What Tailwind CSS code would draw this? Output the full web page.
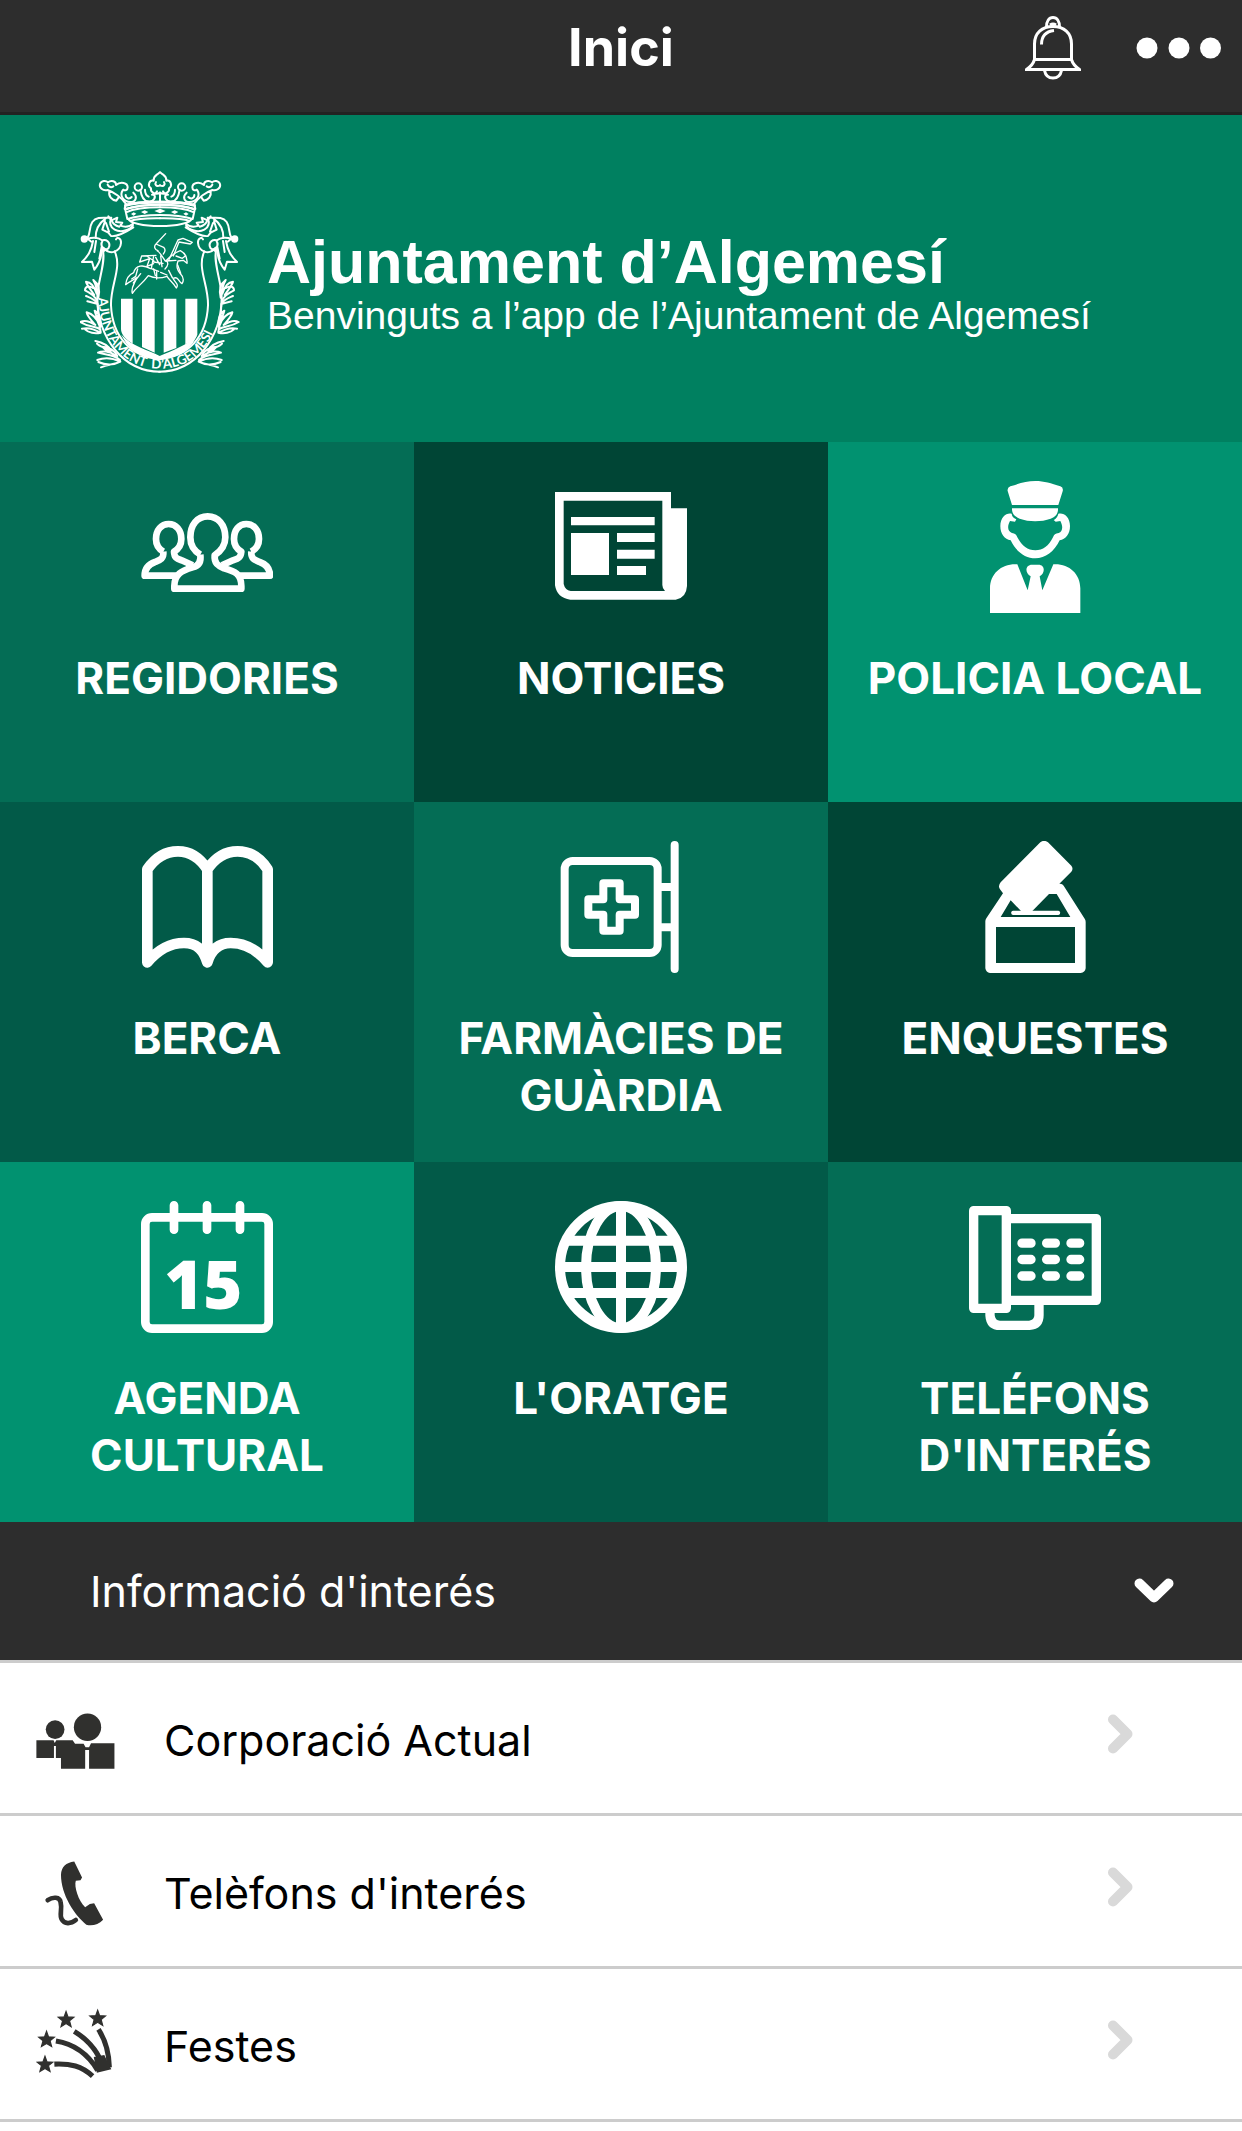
<!DOCTYPE html>
<html lang="ca">
  <head>
    <meta charset="UTF-8" />
    <meta name="viewport" content="width=device-width, initial-scale=1.0" />
    <title>Ajuntament d’Algemesí</title>
    <script src="https://cdn.jsdelivr.net/npm/@tailwindcss/browser@4"></script>
  </head>

  <body class="bg-white font-['Inter',sans-serif] text-black">
    <header
      class="grid grid-cols-3 items-center h-[115px] pb-4 bg-[#2d2d2d] border-b-3 border-[#222222] text-white"
    >
      <h1 class="col-start-2 text-center text-[52px] leading-[60px] font-bold">Inici</h1>
      <div class="flex items-center justify-end gap-[55px] pr-5">
        <button type="button" aria-label="Notificacions">
          <svg class="w-[56px] h-[64px]" viewBox="0 0 56 64" fill="none" stroke="currentColor" stroke-width="3">
            <path d="M21.500 11C21.500 5 24 1.500 28 1.500S34.500 5 34.500 11M25 9q3-2 6 0" />
            <path d="M9.500 43.500V28C9.500 17 17 10.500 28 10.500S46.500 17 46.500 28V43.500Z" />
            <path d="M9.500 43.500C8.500 47 6 50.500 1.500 53.500H54.500C50 50.500 47.500 47 46.500 43.500" />
            <path d="M19.500 54.500C20.500 59.500 23.500 62 28 62S35.500 59.500 36.500 54.500M16.500 28.500C16.500 20 21 15.500 29 14.500" />
          </svg>
        </button>
        <button type="button" aria-label="Més opcions">
          <svg class="w-[86px] h-[22px]" viewBox="0 0 86 22" fill="currentColor">
            <circle cx="11" cy="11" r="10.500" />
            <circle cx="43" cy="11" r="10.500" />
            <circle cx="74.500" cy="11" r="10.500" />
          </svg>
        </button>
      </div>
    </header>

    <main>
      <section
        class="flex items-center gap-[27px] pl-20 pt-[55px] pb-[68px] bg-[#008060] text-white font-['Liberation_Sans',sans-serif]"
      >
        <svg class="w-[160px] h-[204px] shrink-0" viewBox="60 60 480 612" fill="none" stroke="currentColor" stroke-width="6" stroke-linecap="round" stroke-linejoin="round" role="img" aria-label="Escut d’Algemesí">
          <!-- crown -->
          <g id="crown-half">
            <path d="M199 163C185 142 160 126 143 120C128 124 117 112 120 102C124 91 138 91 144 97C154 89 169 94 168 105C182 93 203 98 203 112C203 121 195 123 190 119M148 124C145 139 155 150 169 152L176 142M143 104q7 12 17 5" />
            <path d="M188 121C178 136 190 156 211 156C229 156 233 139 220 128M215 141c-7 8-18 4-18-6M241 119C243 133 248 153 264 154C282 156 290 141 280 132M266 140q-11-5-11-21" />
            <circle cx="235" cy="111" r="11" />
            <path d="M300 128C286 136 270 126 273 115C261 107 268 89 281 92C280 76 289 77 299 67M300 106C287 112 284 102 288 96M300 128V155M291 124q-5 10-15 10" />
            <path d="M300 164C258 164 220 168 196 179L202 207C230 198 265 195 300 195M300 172C260 172 220 177 198 187M205 206C208 219 250 228 300 228M211 213C235 204 265 205 300 205" />
            <path d="M300 155C260 155 220 158 196 165L194 177C230 167 262 164 300 164" />
          </g>
          <use href="#crown-half" transform="matrix(-1 0 0 1 600 0)" />
          <path d="M283 183l17-7 17 7-17 7zM243 186l11-5 11 5-11 6zM333 186l11-5 11 5-11 6zM213 192l8-5 8 4-8 6zM370 191l8-4 8 5-8 5z" fill="currentColor" stroke="none" />
          <path d="M197 166C230 156 260 157 300 157S370 156 403 166" stroke-width="9" />

          <!-- scrolls, ribbons and branches -->
          <g id="side">
            <path d="M219 225C210 241 183 249 164 239C151 232 148 218 154 203C136 205 111 197 97 216C87 231 92 247 83 263" />
            <path d="M145 199L154 211L172 203L168 216L187 218L181 227C198 233 211 229 220 220M154 209C158 221 167 228 178 230M137 205C118 219 106 235 107 264M138 219L147 245M135 213L127 239L145 248L153 258C171 261 192 250 220 232" />
            <path d="M82 267C97 261 116 262 126 271C140 267 150 276 148 288C146 299 136 301 130 293C151 319 181 303 183 279C184 264 172 260 168 268M84 267L94 275M128 272C121 282 123 291 133 302" />
            <circle cx="73" cy="267" r="8" fill="currentColor" />
            <path d="M99 273C94 303 84 318 66 336L96 335L103 359C117 342 126 321 126 290M108 273L103 306M125 291L118 326" />
            <path d="M128 296C139 340 111 395 112 445C114 565 190 665 300 665" />
            <path d="M164 304C187 354 151 404 153 466C157 562 213 620 300 628" />
            <path d="M111 451C103 437 92 429 75 421C75 411 85 405 99 414M103 435C91 418 80 404 78 395C91 396 103 408 110 431C112 414 106 401 100 390C118 403 120 423 115 443M78 438C92 444 105 448 113 462M82 454L111 461" />
            <path d="M121 538C105 527 86 532 61 516C75 508 91 515 106 525C91 508 81 497 80 487C97 492 110 503 117 524C115 506 106 495 104 482C120 491 125 514 119 536M66 536C85 531 108 540 122 548C104 552 85 548 76 539M113 465C115 488 113 512 122 545" />
            <path d="M106 573C127 577 145 586 153 602C140 592 119 592 111 581M180 630C161 613 137 615 114 608C126 602 149 602 166 617C152 604 135 602 127 590C147 590 165 602 172 618M112 630C134 621 159 624 181 635C159 647 137 646 115 636M123 652C145 643 161 644 181 635" />
          </g>
          <use href="#side" transform="matrix(-1 0 0 1 597 0)" />

          <!-- horse and rider -->
          <g stroke-width="4">
            <path d="M317 251L288 282C280 289 285 300 294 302M288 282L311 292C317 298 315 306 310 312M245 318L288 316M245 318L239 336L269 326L261 349L281 341M260 318L282 333M292 303C300 306 305 319 316 333M281 318L274 356L296 364M302 318L306 350M287 322L299 344M281 336L309 340" />
            <path d="M272 356C249 343 227 345 221 368C207 374 199 385 197 404C207 394 222 391 229 383C228 397 211 411 217 430C229 411 245 404 265 377C288 388 306 384 321 379C329 392 341 398 349 414C357 402 347 400 339 385C356 378 354 394 366 401C372 392 371 381 360 370C352 359 348 351 354 333L370 331L381 340C383 321 374 309 361 302C346 307 335 315 318 332C326 337 325 347 315 357" />
            <path d="M340 318L357 276L391 282L397 277L369 265L354 270L325 333M348 318L367 325L377 317M290 365V387M326 361L337 383M353 345L362 370M281 357L286 377M233 357L227 379L215 387M242 371L220 399M318 333L348 331M302 367L321 375" />
          </g>

          <!-- stripes of the shield -->
          <path d="M183 446H218V581C198 569 183 554 183 537ZM246 446H284V608L246 591ZM311 446H349V594L311 608ZM376 446H412V554C406 567 392 576 376 583Z" fill="currentColor" stroke="none" />
          <path d="M184 554C207 604 251 626 300 626S391 604 412 554C383 585 335 602 299 618C265 599 216 590 184 554Z" fill="currentColor" stroke="none" />
          <path id="motto" d="M115 440C116 568 192 656 300 656S483 568 484 425" stroke="none" />
          <text class="font-['Lato',sans-serif] font-bold" fill="currentColor" stroke="none" font-size="40">
            <textPath href="#motto" startOffset="3">AJUNTAMENT &#160;D’ALGEMESI</textPath>
          </text>
        </svg>
        <div class="pt-7">
          <p class="text-[61px] leading-[60px] font-bold">Ajuntament d’Algemesí</p>
          <p class="text-[39px] leading-[48px]">Benvinguts a l’app de l’Ajuntament de Algemesí</p>
        </div>
      </section>

      <nav class="grid grid-cols-3 text-center text-[44px] leading-[57px] font-bold text-white">
        <a href="#regidories" class="flex flex-col items-center gap-[37px] min-h-[360px] pt-[39px] px-5 bg-[#046d55]">
          <svg class="size-[132px]" viewBox="423 123 396 396" fill="none" stroke="currentColor" stroke-width="20" stroke-linejoin="round">
            <path d="M601 344C584 334 571 318 571 292C571 254 592 229 623 229S676 254 676 292C676 318 662 334 644 346C642 370 654 378 672 385C705 394 724 402 724 438V446H523V438C523 402 545 392 578 382C596 378 604 366 601 344" />
            <path d="M490 335C478 328 468 316 468 297C468 270 484 252 506 252S544 270 544 297C544 316 534 328 522 335C523 354 530 356 545 361L578 376M490 335C492 356 480 360 465 366C445 373 434 385 434 407H530" />
            <path d="M754 335C766 328 777 316 777 297C777 270 761 252 739 252S702 270 702 297C702 316 712 328 724 335C722 354 714 356 699 361L666 376M754 335C752 356 764 360 779 366C799 373 810 385 810 407H718" />
          </svg>
          REGIDORIES
        </a>

        <a href="#noticies" class="flex flex-col items-center gap-[37px] min-h-[360px] pt-[39px] px-5 bg-[#004535]">
          <svg class="size-[132px]" viewBox="423 123 396 396" fill="currentColor">
            <path fill-rule="evenodd" d="M423 156H771V205H819V438Q817 474 785 479H469Q429 474 423 436ZM449 182V432Q453 450 470 453H753Q745 445 745 435V182Z" />
            <path d="M471 231H722V256H471ZM471 279H585V405H471ZM609 279H722V306H609ZM609 329H722V356H609ZM609 378H696V405H609Z" />
          </svg>
          NOTICIES
        </a>

        <a href="#policia" class="flex flex-col items-center gap-[37px] min-h-[360px] pt-[39px] px-5 bg-[#019270]">
          <svg class="size-[132px]" viewBox="423 123 396 396" fill="currentColor">
            <path d="M552 195L539 153Q537 143 547 139C575 130 595 123 622 123S669 130 697 139Q707 143 704 154L691 195ZM552 205H690C691 222 682 230 668 236C640 246 603 246 575 236C561 230 551 222 552 205Z" />
            <path d="M551 221C536 217 517 230 517 258C517 283 530 297 548 301C564 335 592 355 622 355S679 335 695 301C713 297 726 283 726 258C726 230 707 217 691 221C688 233 682 237 677 240L683 245L697 243C706 260 704 274 692 279C682 280 678 284 675 292C662 318 645 331 622 331S582 318 568 292C565 284 561 280 552 279C539 274 537 260 546 243L561 245L565 238C559 235 552 231 551 221Z" />
            <path d="M486 519V445C486 400 522 370 568 373L599 451L608 409C590 399 591 374 612 374H631C652 374 652 399 635 409L643 451L676 373C721 370 757 400 757 445V519Z" />
          </svg>
          POLICIA LOCAL
        </a>

        <a href="#berca" class="flex flex-col items-center gap-[37px] min-h-[360px] pt-[39px] px-5 bg-[#025a48]">
          <svg class="size-[132px]" viewBox="423 123 396 396" fill="none" stroke="currentColor" stroke-width="32" stroke-linejoin="round" stroke-linecap="round">
            <path d="M442 487V208C465 174 498 154 534 154S600 174 622 208C645 174 677 154 713 154S781 174 803 208V487C770 448 733 429 692 429C652 429 632 454 622 487C612 454 594 429 552 429C511 429 475 448 442 487M622 208V487" />
          </svg>
          BERCA
        </a>

        <a href="#farmacies" class="flex flex-col items-center gap-[37px] min-h-[360px] pt-[39px] px-5 bg-[#046d55]">
          <svg class="size-[132px]" viewBox="423 123 396 396" fill="none" stroke="currentColor" stroke-width="24" stroke-linejoin="round">
            <rect x="452" y="183" width="279" height="276" rx="24" />
            <path d="M782 135V507" stroke-linecap="round" />
            <path d="M731 261H782M731 382H782M568 250H617V298H663V344H617V392H568V344H523V298H568Z" />
          </svg>
          FARMÀCIES DE GUÀRDIA
        </a>

        <a href="#enquestes" class="flex flex-col items-center gap-[37px] min-h-[360px] pt-[39px] px-5 bg-[#004535]">
          <svg class="size-[132px]" viewBox="423 123 396 396" fill="currentColor">
            <path fill-rule="evenodd" d="M637 127Q648 118 660 127L730 197Q737 206 730 215L694 251Q703 250 707 257L770 356Q773 360 773 366V505Q771 518 758 519H486Q474 517 472 505V364Q472 359 475 355L525 280L516 268Q509 258 518 247ZM548 301L518 351H727L686 282H663L613 333H579ZM504 381V489H741V381Z" />
            <rect x="550" y="332" width="146" height="13" rx="5" />
          </svg>
          ENQUESTES
        </a>

        <a href="#agenda" class="flex flex-col items-center gap-[37px] min-h-[360px] pt-[39px] px-5 bg-[#019270]">
          <svg class="size-[132px]" viewBox="423 123 396 396" fill="none" stroke="currentColor" stroke-width="26">
            <rect x="436" y="172" width="370" height="334" rx="20" />
            <path d="M522 136V209M621 136V209M720 136V209" stroke-linecap="round" />
            <text class="font-['Open_Sans',sans-serif] font-extrabold" x="610" y="447" font-size="200" text-anchor="middle" fill="currentColor" stroke="none">15</text>
          </svg>
          AGENDA CULTURAL
        </a>

        <a href="#oratge" class="flex flex-col items-center gap-[37px] min-h-[360px] pt-[39px] px-5 bg-[#025a48]">
          <svg class="size-[132px]" viewBox="423 123 396 396" fill="none" stroke="currentColor" stroke-width="30">
            <circle cx="621" cy="321" r="183" />
            <ellipse cx="621" cy="321" rx="105" ry="183" />
            <path d="M621 138V504M438 321H804M458 242H784M458 399H784" />
          </svg>
          L'ORATGE
        </a>

        <a href="#telefons" class="flex flex-col items-center gap-[37px] min-h-[360px] pt-[39px] px-5 bg-[#046d55]">
          <svg class="size-[132px]" viewBox="423 123 396 396" fill="none" stroke="currentColor" stroke-width="28" stroke-linejoin="round">
            <path d="M437 152H535V445H437ZM549 176H805V421H549M486 455V466Q488 496 516 496H604Q633 494 633 466V425" />
            <path d="M582 249.500H609M656 249.500H682M729 249.500H755M582 298.500H609M656 298.500H682M729 298.500H755M582 348H609M656 348H682M729 348H755" stroke-linecap="round" />
          </svg>
          TELÉFONS D'INTERÉS
        </a>
      </nav>

      <section>
        <h2>
          <button
            type="button"
            aria-expanded="true"
            class="flex items-center justify-between w-full h-[138px] pl-[90px] pr-[68px] bg-[#2d2d2d] text-[43px] leading-[60px] text-white"
          >
            Informació d'interés
            <svg class="w-[40px] h-[26px]" viewBox="0 0 40 26" fill="none" stroke="currentColor" stroke-width="10" stroke-linecap="round" stroke-linejoin="round">
              <path d="M5.500 5.500L20 19.500L34.500 5.500" />
            </svg>
          </button>
        </h2>
        <ul class="border-t-3 border-[#cccccc] text-[43px] leading-[60px]">
          <li class="border-b-3 border-[#cccccc]">
            <a href="#corporacio" class="flex items-center h-[150px] pl-9 pr-[109px]">
              <svg class="size-20 mr-12 text-[#30302e]" viewBox="91 457 203 205" fill="currentColor">
                <circle cx="139" cy="538" r="24" />
                <circle cx="222" cy="532" r="35" />
                <path d="M91 565H135L138 572L142 565H184L190 574H212L217 583H226L231 573H291V638H226V590H216V638H154V611H141V580H136V611H91Z" />
              </svg>
              <span class="grow pt-1">Corporació Actual</span>
              <svg class="w-[26px] h-[40px] mb-2 text-[#d9d9d9]" viewBox="0 0 26 40" fill="none" stroke="currentColor" stroke-width="10" stroke-linecap="round" stroke-linejoin="round">
                <path d="M6 5.500L20.500 20L6 34.500" />
              </svg>
            </a>
          </li>
          <li class="border-b-3 border-[#cccccc]">
            <a href="#telefons-interes" class="flex items-center h-[150px] pl-9 pr-[109px]">
              <svg class="size-20 mr-12 text-[#30302e]" viewBox="91 849 203 205" fill="currentColor">
                <path d="M188 876L208 917L204 924L192 925C187 940 199 977 216 993L228 985L239 983L262 1025C250 1037 235 1042 219 1038C189 1013 154 962 154 910C155 889 167 879 188 876Z" />
                <path d="M120 975C133 966 151 966 153 980C158 1000 149 1011 156 1024C162 1037 180 1036 192 1026" fill="none" stroke="currentColor" stroke-width="12" stroke-linecap="round" />
              </svg>
              <span class="grow pt-1">Telèfons d'interés</span>
              <svg class="w-[26px] h-[40px] mb-2 text-[#d9d9d9]" viewBox="0 0 26 40" fill="none" stroke="currentColor" stroke-width="10" stroke-linecap="round" stroke-linejoin="round">
                <path d="M6 5.500L20.500 20L6 34.500" />
              </svg>
            </a>
          </li>
          <li class="border-b-3 border-[#cccccc]">
            <a href="#festes" class="flex items-center h-[150px] pl-9 pr-[109px]">
              <svg class="size-20 mr-12 text-[#30302e]" viewBox="91 1242 203 205" fill="currentColor">
                <path id="star" d="M167 1261L172 1275L187 1276L176 1285L180 1300L167 1292L154 1300L158 1285L147 1276L162 1275Z" stroke="currentColor" stroke-width="3" />
                <use href="#star" x="81" y="-3" />
                <use href="#star" x="-50" y="51" />
                <use href="#star" x="-54" y="115" />
                <path d="M250 1307C267 1333 277 1368 278 1404M188 1312C227 1336 251 1366 263 1406M141 1337C184 1344 223 1370 248 1412M137 1396C178 1394 207 1401 235 1427" fill="none" stroke="currentColor" stroke-width="13" />
                <path d="M238 1378L265 1373L283 1409L246 1418Z" />
              </svg>
              <span class="grow pt-1">Festes</span>
              <svg class="w-[26px] h-[40px] mb-2 text-[#d9d9d9]" viewBox="0 0 26 40" fill="none" stroke="currentColor" stroke-width="10" stroke-linecap="round" stroke-linejoin="round">
                <path d="M6 5.500L20.500 20L6 34.500" />
              </svg>
            </a>
          </li>
        </ul>
      </section>
    </main>
  </body>
</html>
